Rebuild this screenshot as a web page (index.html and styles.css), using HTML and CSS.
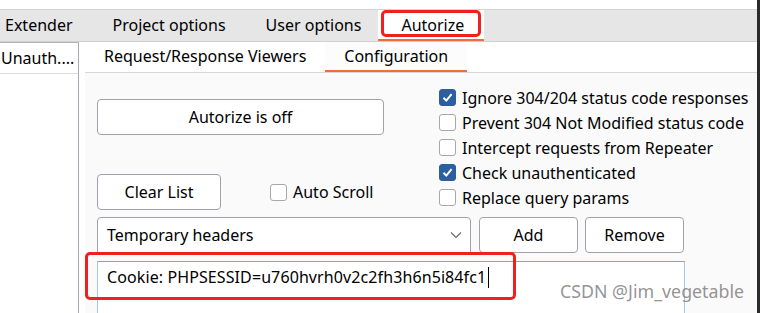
FILE: index.html
```html
<!DOCTYPE html>
<html lang="en">
  <head>
    <meta charset="UTF-8" />
    <meta name="viewport" content="width=device-width, initial-scale=1.0" />
    <title>Autorize - Configuration</title>
    <link rel="stylesheet" href="styles.css">
  </head>
  <body>
    <div class="window">
      <div class="app">
        <div class="top-strip"></div>
        <div class="main-tabs">
          <div class="main-tab">Extender</div>
          <div class="main-tab">Project options</div>
          <div class="main-tab">User options</div>
          <div class="main-tab active">Autorize</div>
        </div>

        <div class="workspace">
          <div class="side-list">
            <div class="side-item">Unauth....</div>
          </div>

          <div class="panel">
            <div class="sub-tabs">
              <div class="sub-tab">Request/Response Viewers</div>
              <div class="sub-tab active">Configuration</div>
            </div>

            <div class="config">
              <div class="config-top">
                <div class="config-left">
                  <button class="btn btn-wide">Autorize is off</button>
                  <div class="clear-row">
                    <button class="btn btn-clear">Clear List</button>
                    <label class="check">
                      <span class="box"></span>
                      <span>Auto Scroll</span>
                    </label>
                  </div>
                </div>

                <div class="config-right">
                  <label class="check">
                    <span class="box checked"></span>
                    <span>Ignore 304/204 status code responses</span>
                  </label>
                  <label class="check">
                    <span class="box"></span>
                    <span>Prevent 304 Not Modified status code</span>
                  </label>
                  <label class="check">
                    <span class="box"></span>
                    <span>Intercept requests from Repeater</span>
                  </label>
                  <label class="check">
                    <span class="box checked"></span>
                    <span>Check unauthenticated</span>
                  </label>
                  <label class="check">
                    <span class="box"></span>
                    <span>Replace query params</span>
                  </label>
                </div>
              </div>

              <div class="header-row">
                <div class="combo">
                  <span>Temporary headers</span>
                  <svg class="chevron" width="12" height="8" viewBox="0 0 12 8">
                    <path d="M1 1.5 L6 6.5 L11 1.5" fill="none" stroke="#6a6a6a" stroke-width="1.2" />
                  </svg>
                </div>
                <button class="btn btn-small">Add</button>
                <button class="btn btn-small">Remove</button>
              </div>

              <div class="header-text">
                <span>Cookie: PHPSESSID=u760hvrh0v2c2fh3h6n5i84fc1</span><span class="caret"></span>
              </div>
            </div>
          </div>
        </div>
      </div>
      <div class="edge"></div>

      <!-- annotations drawn over the screenshot -->
      <div class="mark mark-tab"></div>
      <div class="mark mark-cookie"></div>
      <div class="watermark">CSDN @Jim_vegetable</div>
    </div>
  </body>
</html>
```

FILE: styles.css
```css
body {
  margin: 0;
  font-family: "Noto Sans", "Liberation Sans", sans-serif;
  font-size: 16px;
  color: #000;
  background: #fff;
}
.window {
  position: relative;
  display: flex;
  width: 760px;
  height: 313px;
  overflow: hidden;
}
.app {
  flex: 1;
  display: flex;
  flex-direction: column;
  min-width: 0;
}
.edge {
  width: 3px;
  background: #2b2b2b;
}
.top-strip {
  flex: none;
  height: 9px;
  border-bottom: 1px solid #d3d3d3;
}
.main-tabs {
  flex: none;
  display: flex;
  height: 31px;
  background: #e6e6e6;
  border-bottom: 1px solid #d0d0d0;
}
.main-tab {
  display: flex;
  align-items: center;
  padding: 0 20px;
  line-height: 31px;
}
.main-tab:first-child {
  padding-left: 5px;
}
.main-tab.active {
  padding-left: 23px;
  margin-left: -3px;
  background: #fff;
  box-shadow: inset 0 -2px 0 #f26b3a;
}

.workspace {
  flex: 1;
  display: flex;
  min-height: 0;
}
.side-list {
  width: 78px;
  border-top: 1px solid #b4b4bc;
  border-right: 1px solid #a9a9b3;
}
.side-item {
  height: 30px;
  line-height: 30px;
  padding-left: 1px;
  border-bottom: 1px solid #dcdcdc;
  white-space: nowrap;
}
.panel {
  flex: 1;
  display: flex;
  flex-direction: column;
  margin-left: 6px;
  min-width: 0;
}
.sub-tabs {
  flex: none;
  display: flex;
  height: 30px;
  border-bottom: 1px solid #d8d8d8;
}
.sub-tab {
  padding: 0 19px;
  line-height: 28px;
}
.sub-tab.active {
  background: #fcfcfc;
  box-shadow: inset 0 -2px 0 #f26b3a;
}

.config {
  flex: 1;
  min-height: 0;
  overflow: hidden;
  background: #fafafa;
  padding: 12px 0 0 12px;
}
.config-top {
  display: flex;
  height: 125px;
}
.config-left {
  width: 287px;
  padding-top: 14px;
}
.btn {
  font: inherit;
  color: #000;
  background: #fff;
  border: 1px solid #a2a2ae;
  border-radius: 4px;
  height: 36px;
  padding: 0;
}
.btn-wide {
  width: 287px;
}
.clear-row {
  display: flex;
  align-items: center;
  gap: 49px;
  margin-top: 39px;
}
.btn-clear {
  width: 124px;
}
.config-right {
  margin-left: 55px;
}
.check {
  display: flex;
  align-items: center;
  gap: 6px;
  height: 25px;
  white-space: nowrap;
}
.box {
  width: 15px;
  height: 15px;
  border: 1px solid #a8a8a8;
  border-radius: 3px;
  background: #fff;
  flex: none;
}
.box.checked {
  border-color: #2d5f9e;
  background: #2d5f9e url("data:image/svg+xml,%3Csvg xmlns='http://www.w3.org/2000/svg' width='15' height='15'%3E%3Cpath d='M3.5 7.8 L6.3 10.6 L11.6 4.2' fill='none' stroke='white' stroke-width='2'/%3E%3C/svg%3E") no-repeat center;
}

.header-row {
  display: flex;
  gap: 8px;
  margin-top: 7px;
}
.combo {
  width: 363px;
  height: 34px;
  padding-left: 9px;
  border: 1px solid #a2a2ae;
  border-radius: 4px 4px 0 0;
  background: #fff;
  display: flex;
  align-items: center;
}
.chevron {
  margin-left: auto;
  margin-right: 8px;
}
.btn-small {
  width: 99px;
}
.btn-small + .btn-small {
  margin-left: -1px;
}
.header-text {
  width: 577px;
  height: 60px;
  margin-top: 8px;
  padding: 3px 0 0 9px;
  background: #fff;
  border: 1px solid #a8c6e6;
  border-top-color: #7aa6d8;
  line-height: 24px;
  letter-spacing: 0.1px;
  white-space: nowrap;
}
.caret {
  display: inline-block;
  width: 1px;
  height: 21px;
  margin-left: 2px;
  vertical-align: -5px;
  background: #000;
}

.mark {
  position: absolute;
  border: 3px solid #ef2020;
  border-radius: 5px;
}
.mark-tab {
  left: 381px;
  top: 10px;
  width: 94px;
  height: 21px;
}
.mark-cookie {
  left: 85px;
  top: 252px;
  width: 425px;
  height: 42px;
}
.watermark {
  position: absolute;
  left: 560px;
  top: 279px;
  font-size: 17.8px;
  color: rgba(120, 120, 120, 0.8);
}
```
